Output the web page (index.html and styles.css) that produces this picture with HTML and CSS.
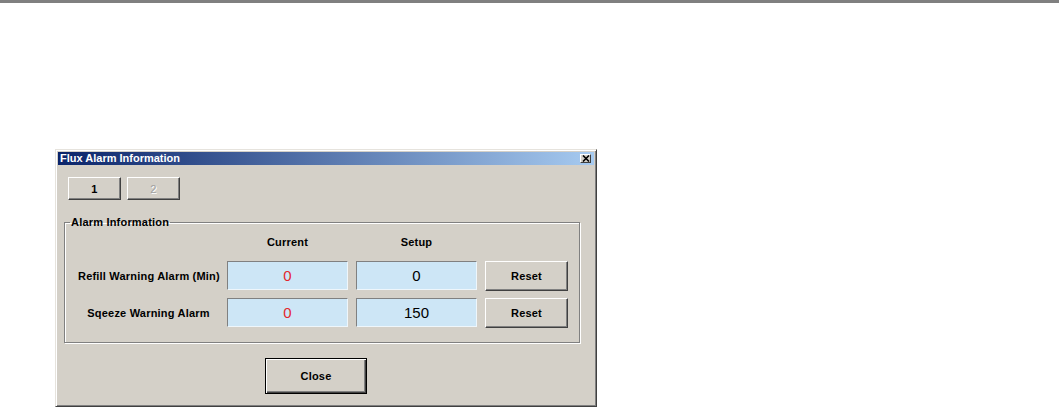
FILE: index.html
```html
<!DOCTYPE html>
<html lang="en">
<head>
    <meta charset="UTF-8">
    <title>Flux Alarm Information</title>
    <link rel="stylesheet" href="styles.css">
</head>
<body>

<div class="window">
    <div class="titlebar">
        <span class="title">Flux Alarm Information</span>
        <button class="title-close" type="button">
            <svg width="8" height="7" viewBox="0 0 8 7">
                <path d="M1 0.5 L7 6.5 M7 0.5 L1 6.5" stroke="#000" stroke-width="1.6"/>
            </svg>
        </button>
    </div>

    <div class="content">
        <div class="pages">
            <button class="btn page" type="button">1</button>
            <button class="btn page" type="button" disabled>2</button>
        </div>

        <fieldset class="group">
            <legend>Alarm Information</legend>
            <div class="alarm-grid">
                <span></span>
                <span class="col-head">Current</span>
                <span class="col-head">Setup</span>
                <span></span>

                <span class="alarm-name">Refill Warning Alarm (Min)</span>
                <div class="value current">0</div>
                <div class="value">0</div>
                <button class="btn reset" type="button">Reset</button>

                <span class="alarm-name">Sqeeze Warning Alarm</span>
                <div class="value current">0</div>
                <div class="value">150</div>
                <button class="btn reset" type="button">Reset</button>
            </div>
        </fieldset>

        <button class="btn close" type="button">Close</button>
    </div>
</div>

</body>
</html>
```

FILE: styles.css
```css
:root {
    --face: #d4d0c8;
    --shadow: #808080;
    --dark: #404040;
    --light: #ffffff;
    --field: #cde6f6;
}

* {
    box-sizing: border-box;
}

body {
    margin: 0;
    background: #fff;
    border-top: 3px solid #808080;
    font-family: "Liberation Sans", Arial, sans-serif;
    font-size: 11px;
    font-weight: bold;
    color: #000;
}

/* Dialog frame */
.window {
    margin: 146px 0 0 55px;
    width: 542px;
    height: 258px;
    padding: 2px;
    background: var(--face);
    border: 1px solid;
    border-color: #e6e3dd var(--dark) var(--dark) #e6e3dd;
    box-shadow: inset 1px 1px var(--light), inset -1px -1px var(--shadow);
}

.titlebar {
    height: 13px;
    display: flex;
    align-items: center;
    justify-content: space-between;
    padding: 0 3px 0 2px;
    background: linear-gradient(to right, #0a246a, #a6caf0);
    color: #fff;
}

.title {
    line-height: 13px;
}

.title-close {
    width: 11px;
    height: 9px;
    padding: 0;
    display: flex;
    align-items: center;
    justify-content: center;
    background: var(--face);
    border: 1px solid;
    border-color: var(--light) var(--dark) var(--dark) var(--light);
}

.content {
    padding: 12px 0 0 6px;
}

/* Raised buttons */
.btn {
    font: inherit;
    letter-spacing: 0.2px;
    color: #000;
    background: var(--face);
    border: 1px solid;
    border-color: var(--light) var(--dark) var(--dark) var(--light);
    box-shadow: inset -1px -1px var(--shadow);
    padding: 0;
}

.btn:disabled {
    color: #a0a0a0;
    font-weight: normal;
    text-shadow: 1px 1px #fff;
}

.pages {
    display: flex;
    gap: 6px;
    margin-left: 4px;
}

.page {
    width: 53px;
    height: 23px;
}

/* Group box */
.group {
    width: 516px;
    margin: 16px 0 0 0;
    padding: 2px 5px 15px 5px;
    border: 1px solid var(--shadow);
    box-shadow: 1px 1px 0 var(--light), inset 1px 1px 0 var(--light);
}

.group legend {
    padding: 0 1px;
    line-height: 13px;
    letter-spacing: 0.2px;
}

.alarm-grid {
    display: grid;
    grid-template-columns: 149px 121px 121px 83px;
    grid-template-rows: 22px 29px 29px;
    column-gap: 8px;
    row-gap: 8px;
    align-items: center;
}

.col-head {
    text-align: center;
    letter-spacing: 0.2px;
}

.alarm-name {
    padding-left: 8px;
    text-align: center;
    letter-spacing: 0.2px;
    white-space: nowrap;
}

.value {
    height: 29px;
    display: flex;
    align-items: center;
    justify-content: center;
    background: var(--field);
    border: 1px solid;
    border-color: var(--shadow) #eef6fb #eef6fb var(--shadow);
    font-size: 15px;
    font-weight: normal;
}

.value.current {
    color: #e3262f;
}

.reset {
    height: 30px;
    align-self: start;
}

.close {
    display: block;
    width: 102px;
    height: 36px;
    margin: 15px 0 0 201px;
    border-color: #000;
    box-shadow: inset 1px 1px var(--light), inset -1px -1px var(--dark), inset -2px -2px var(--shadow);
}
```
